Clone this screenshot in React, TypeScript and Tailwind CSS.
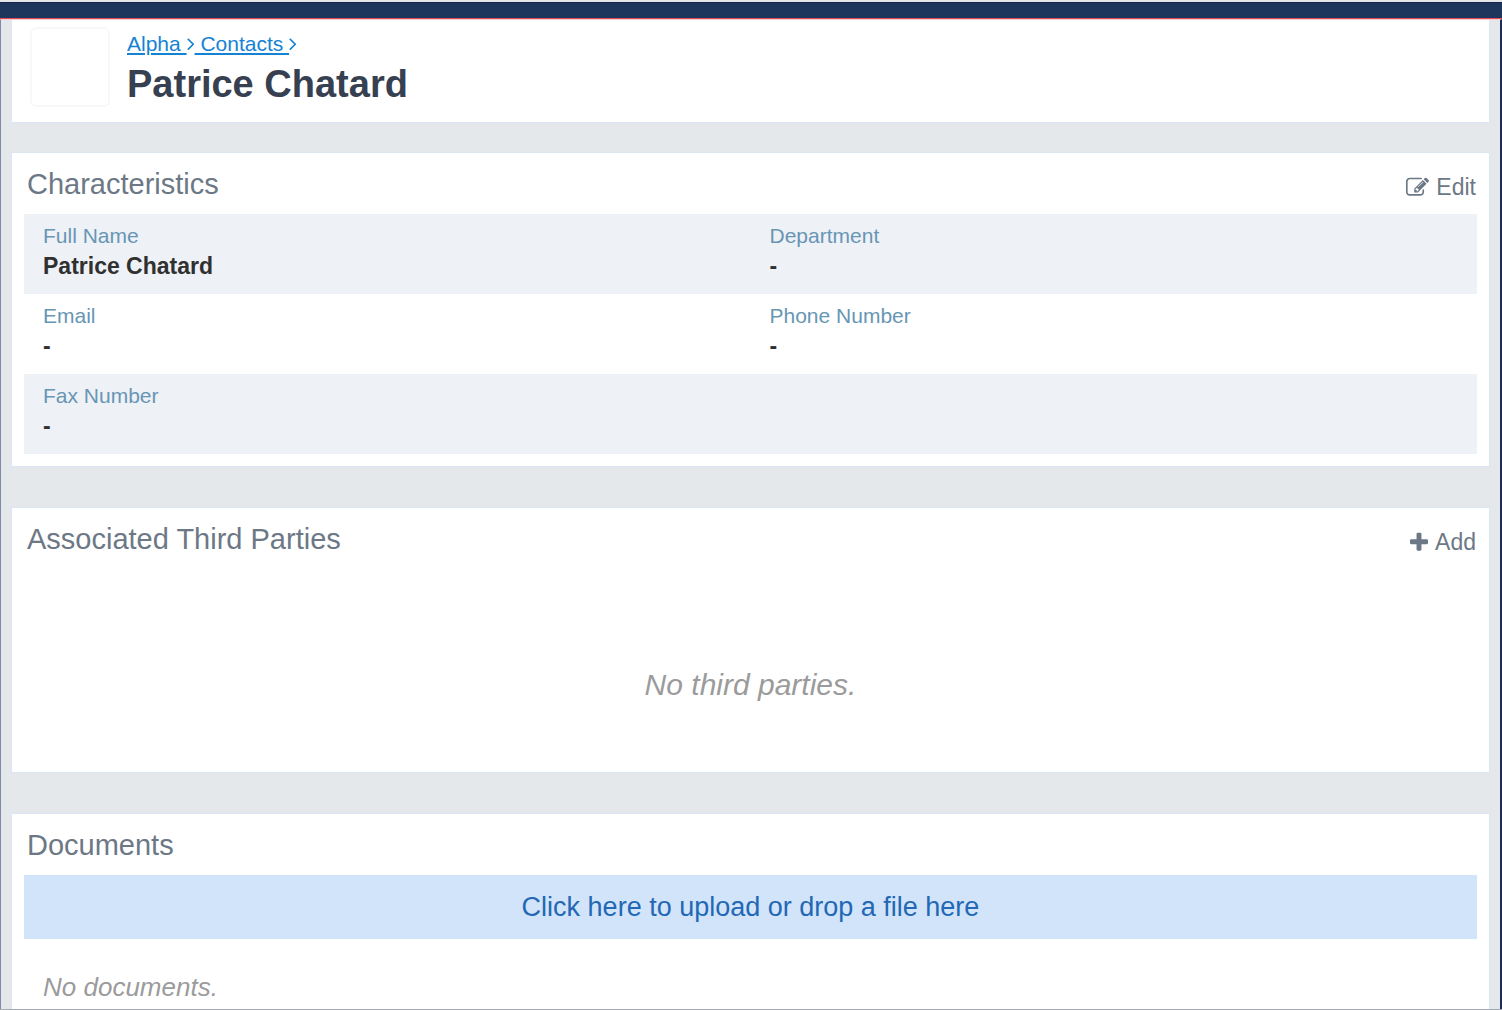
import type { ReactNode } from "react";

const fields = [
  [
    { label: "Full Name", value: "Patrice Chatard" },
    { label: "Department", value: "-" },
  ],
  [
    { label: "Email", value: "-" },
    { label: "Phone Number", value: "-" },
  ],
  [{ label: "Fax Number", value: "-" }],
];

function AngleRight() {
  return (
    <svg viewBox="576 0 640 1792" className="inline-block h-[21px] w-[8px] align-[-3px]" fill="currentColor" aria-hidden="true">
      <path d="M1171 960q0 13-10 23l-466 466q-10 10-23 10t-23-10l-50-50q-10-10-10-23t10-23l393-393-393-393q-10-10-10-23t10-23l50-50q10-10 23-10t23 10l466 466q10 10 10 23z" />
    </svg>
  );
}

function EditIcon() {
  return (
    <svg viewBox="0 0 1792 1792" className="h-[23px] w-[23px]" fill="currentColor" aria-hidden="true">
      <path d="M888 1184l116-116-152-152-116 116v56h96v96h56zm440-720q-16-16-33 1l-350 350q-17 17-1 33t33-1l350-350q17-17 1-33zm80 594v190q0 119-84.5 203.5t-203.5 84.5h-832q-119 0-203.5-84.5t-84.5-203.5v-832q0-119 84.5-203.5t203.5-84.5h832q63 0 117 25 15 7 18 23 3 17-9 29l-49 49q-14 14-32 8-23-6-45-6h-832q-66 0-113 47t-47 113v832q0 66 47 113t113 47h832q66 0 113-47t47-113v-126q0-13 9-22l64-64q15-15 35-7t20 29zm-96-738l288 288-672 672h-288v-288zm444 132l-92 92-288-288 92-92q28-28 68-28t68 28l152 152q28 28 28 68t-28 68z" />
    </svg>
  );
}

function PlusIcon() {
  return (
    <svg viewBox="192 0 1408 1792" className="h-[23px] w-[18px]" fill="currentColor" aria-hidden="true">
      <path d="M1600 736v192q0 40-28 68t-68 28h-416v416q0 40-28 68t-68 28h-192q-40 0-68-28t-28-68v-416h-416q-40 0-68-28t-28-68v-192q0-40 28-68t68-28h416v-416q0-40 28-68t68-28h192q40 0 68 28t28 68v416h416q40 0 68 28t28 68z" />
    </svg>
  );
}

type CardProps = {
  title: string;
  action?: ReactNode;
  className?: string;
  children: ReactNode;
};

function Card({ title, action, className = "", children }: CardProps) {
  return (
    <section className={`rounded-[2px] border border-[#dae7f3] bg-white p-3 ${className}`}>
      <div className="mb-[11px] flex items-end justify-between pl-[3px] pr-px text-[#6c7885]">
        <h2 className="text-[29px] leading-[38px]">{title}</h2>
        {action}
      </div>
      {children}
    </section>
  );
}

export default function App() {
  return (
    <div className="flex min-h-screen flex-col border-b border-[#a3a9b5] bg-[#e4e8eb] pt-[2px] font-['Liberation_Sans',Arial,sans-serif]">
      {/* Top bar */}
      <div className="h-[17px] border-b border-t border-b-[#e04a55] border-t-[#15254d] bg-[#1f365c]" />

      <main className="flex flex-1 flex-col border-l border-r-2 border-t border-l-[#7f8aab] border-r-[#1f2a56] border-t-[#f6c9cd] px-[10px]">
        <header className="flex gap-[17px] rounded-b-[2px] border border-t-0 border-[#dae7f3] bg-white px-[18px] pb-[13px] pt-[7px]">
          <div className="size-[80px] rounded-md border-2 border-[#f8f8f8] bg-white" />
          <div className="pt-[2px]">
            <nav className="text-[21px] leading-[30px] text-[#1583d3]" aria-label="Breadcrumb">
              <a href="#alpha" className="whitespace-pre underline">{"Alpha "}</a>
              <AngleRight />
              <a href="#contacts" className="whitespace-pre underline">{" Contacts "}</a>
              <AngleRight />
            </nav>
            <h1 className="text-[38px] font-bold leading-[50px] text-[#364050]">Patrice Chatard</h1>
          </div>
        </header>

        <Card
          title="Characteristics"
          className="mt-[29px]"
          action={
            <button type="button" className="flex items-center gap-[7px] text-[23px] leading-8">
              <EditIcon />
              Edit
            </button>
          }
        >
          <dl>
            {fields.map((row) => (
              <div key={row[0].label} className="grid grid-cols-2 odd:bg-[#eef1f6]">
                {row.map((field) => (
                  <div key={field.label} className="px-[19px] pb-[13px] pt-[7px] leading-[30px]">
                    <dt className="text-[21px] text-[#6896b4]">{field.label}</dt>
                    <dd className="text-[23px] font-bold text-[#303030]">{field.value}</dd>
                  </div>
                ))}
              </div>
            ))}
          </dl>
        </Card>

        <Card
          title="Associated Third Parties"
          className="mt-10"
          action={
            <button type="button" className="flex items-center gap-[7px] text-[23px] leading-8">
              <PlusIcon />
              Add
            </button>
          }
        >
          <p className="pb-[55px] pt-24 text-center text-[30px] italic leading-10 text-[#9b9b9b]">No third parties.</p>
        </Card>

        <Card title="Documents" className="mt-10 flex-1 rounded-b-none border-b-0 pb-0">
          <button type="button" className="block h-16 w-full bg-[#d2e4f9] text-[27px] text-[#2268b5]">
            Click here to upload or drop a file here
          </button>
          <p className="px-[19px] pt-7 text-[26px] italic leading-10 text-[#9b9b9b]">No documents.</p>
        </Card>
      </main>
    </div>
  );
}
